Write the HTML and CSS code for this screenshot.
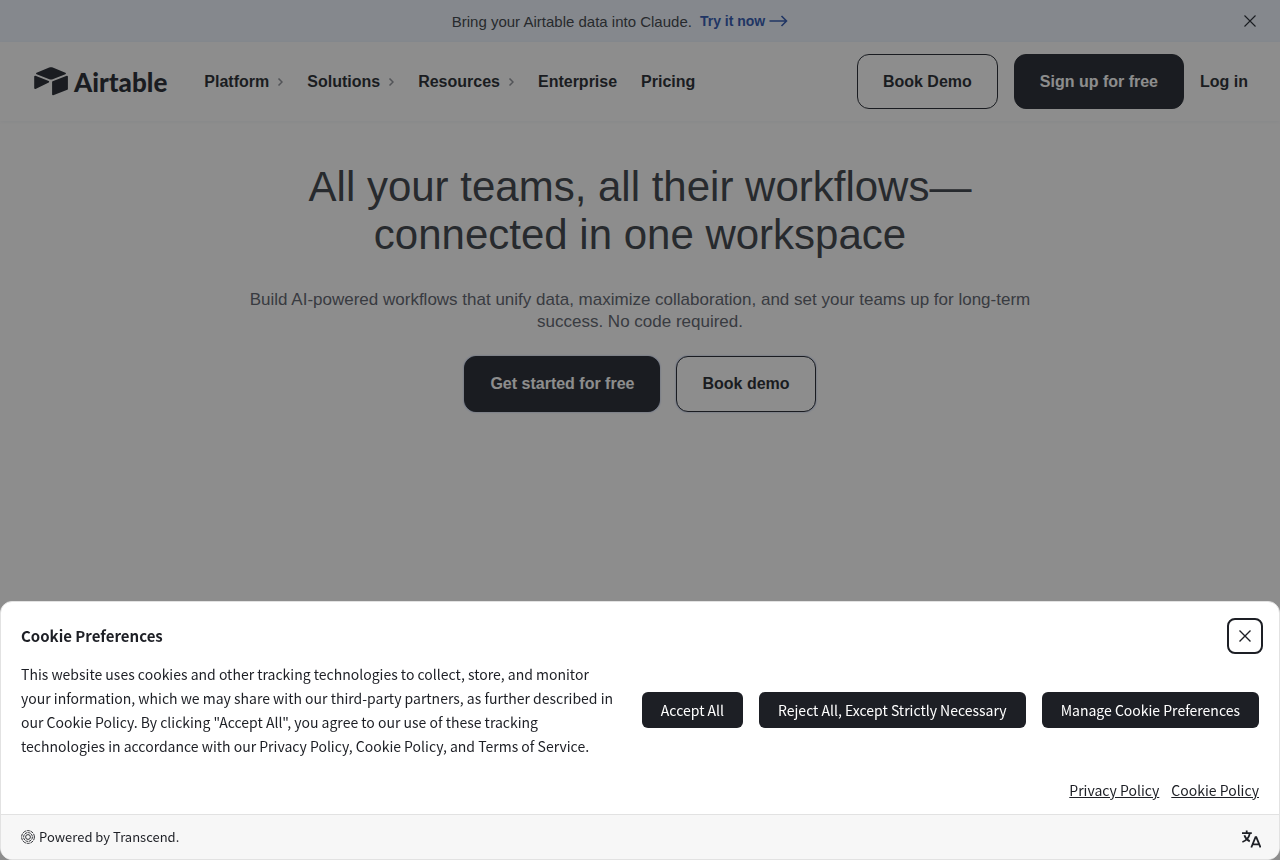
FILE: index.html
```html
<!DOCTYPE html>
<html lang="en">
<head>
  <meta charset="UTF-8">
  <meta name="viewport" content="width=device-width, initial-scale=1.0">
  <title>Airtable</title>
  <link rel="stylesheet" href="styles.css">
</head>
<body>
  <div class="banner">
    <p class="banner-text">Bring your Airtable data into Claude.
      <a class="banner-link" href="#">Try it now
        <svg width="19" height="12" viewBox="0 0 19 12" fill="none" stroke="currentColor" stroke-width="1.6"><path d="M0.500 6h17M12.500 1l5 5-5 5"/></svg>
      </a>
    </p>
    <button class="banner-close" type="button" aria-label="Dismiss">
      <svg width="12" height="12" viewBox="0 0 12 12" fill="none" stroke="currentColor" stroke-width="1.1"><path d="M0.5 0.5l11 11M11.5 0.5l-11 11"/></svg>
    </button>
  </div>

  <header class="navbar">
    <a class="logo" href="#">
      <svg width="34" height="29" viewBox="0 0 34 29" fill="currentColor">
        <path d="M15.2 0.6 2.6 5.7c-.7.3-.7 1.2 0 1.5l12.7 5c1.1.45 2.3.45 3.4 0l12.700-5c.7-.3.7-1.2 0-1.5L18.8.6c-1.150-.5-2.450-.5-3.6 0z"/>
        <path d="M18.1 15v12.4c0 .6.6 1 1.150.8l14.100-5.400c.35-.15.55-.45.55-.8V9.500c0-.6-.6-1-1.150-.8l-14.100 5.500c-.35.100-.55.450-.55.800z"/>
        <path d="M14.8 15.4 1.5 21.9c-.6.3-1.300-.1-1.300-.8V9.600c0-.65.65-1.050 1.250-.8l13.300 5.300c.55.250.6 1.050.050 1.300z"/>
      </svg>
      <span>Airtable</span>
    </a>
    <nav class="nav-links">
      <a href="#">Platform <svg width="6" height="8" viewBox="0 0 6 8"><path d="M1.500 0.500L5 4 1.500 7.500"/></svg></a>
      <a href="#">Solutions <svg width="6" height="8" viewBox="0 0 6 8"><path d="M1.500 0.500L5 4 1.500 7.500"/></svg></a>
      <a href="#">Resources <svg width="6" height="8" viewBox="0 0 6 8"><path d="M1.500 0.500L5 4 1.500 7.500"/></svg></a>
      <a href="#">Enterprise</a>
      <a href="#">Pricing</a>
    </nav>
    <div class="nav-actions">
      <button class="btn btn-outline" type="button">Book Demo</button>
      <button class="btn btn-dark" type="button">Sign up for free</button>
      <a class="login" href="#">Log in</a>
    </div>
  </header>

  <main class="hero">
    <h1>All your teams, all their workflows—<br>connected in one workspace</h1>
    <p>Build AI-powered workflows that unify data, maximize collaboration, and set your teams up for long-term success. No code required.</p>
    <div class="hero-actions">
      <button class="btn btn-dark" type="button">Get started for free</button>
      <button class="btn btn-outline" type="button">Book demo</button>
    </div>
  </main>

  <div class="backdrop"></div>

  <section class="cookie" role="dialog" aria-labelledby="cookie-title">
    <div class="cookie-header">
      <h2 id="cookie-title">Cookie Preferences</h2>
      <button class="cookie-close" type="button" aria-label="Close">
        <svg width="12" height="12" viewBox="0 0 12 12" fill="none" stroke="currentColor" stroke-width="1.4"><path d="M0.5 0.5l11 11M11.5 0.5l-11 11"/></svg>
      </button>
    </div>
    <div class="cookie-body">
      <p>This website uses cookies and other tracking technologies to collect, store, and monitor your information, which we may share with our third-party partners, as further described in our Cookie Policy. By clicking "Accept All", you agree to our use of these tracking technologies in accordance with our Privacy Policy, Cookie Policy, and Terms of Service.</p>
      <div class="cookie-buttons">
        <button type="button">Accept All</button>
        <button type="button">Reject All, Except Strictly Necessary</button>
        <button type="button">Manage Cookie Preferences</button>
      </div>
    </div>
    <div class="cookie-links">
      <a href="#">Privacy Policy</a>
      <a href="#">Cookie Policy</a>
    </div>
    <div class="cookie-footer">
      <a class="powered" href="#">
        <svg width="14" height="14" viewBox="0 0 14 14" fill="none" stroke="currentColor" stroke-width="0.9">
          <circle cx="7" cy="7" r="6.4" stroke-dasharray="3.2 0.8"/>
          <circle cx="7" cy="7" r="4.4" stroke-dasharray="2.6 0.8"/>
          <circle cx="7" cy="7" r="2.4"/>
        </svg>
        Powered by Transcend.
      </a>
      <button class="language" type="button" aria-label="Language">
        <svg width="20" height="20" viewBox="0 0 20 20" fill="none" stroke="currentColor" stroke-width="1.8">
          <path d="M5.700 1.500v2.400M1 4.200h9.800M8.800 4.400C8 8.500 5.500 11.500 1.400 13M3.400 6.200c1 3 3 5 5.400 6.200"/>
          <path d="M10.300 18.500l4.200-10.300h.8l4.200 10.300M11.700 15.300h6.400"/>
        </svg>
      </button>
    </div>
  </section>
</body>
</html>
```
FILE: styles.css
```css
* {
  box-sizing: border-box;
}

body {
  margin: 0;
  min-height: 100vh;
  background: #fff;
  color: #181d26;
  font-family: "Liberation Sans", Arial, sans-serif;
  font-size: 16px;
}

a {
  color: inherit;
  text-decoration: none;
}

button {
  font-family: inherit;
  font-size: inherit;
  color: inherit;
  cursor: pointer;
}

svg {
  display: block;
}

.banner {
  display: flex;
  align-items: center;
  height: 42px;
  padding: 0 24px;
  background: #eef5ff;
}

.banner-text {
  display: flex;
  flex: 1;
  justify-content: center;
  gap: 8px;
  margin: 0;
  padding-right: 28px;
  color: #333840;
  font-size: 15px;
}

.banner-link {
  display: flex;
  align-items: center;
  gap: 4px;
  color: #254fad;
  font-size: 14px;
  font-weight: bold;
}

.banner-close {
  padding: 0;
  border: none;
  background: none;
}

.navbar {
  display: flex;
  align-items: center;
  height: 79px;
  padding: 0 32px 0 34px;
  box-shadow: 0 1px 4px rgba(15, 48, 106, 0.06);
}

.logo {
  display: flex;
  align-items: center;
  gap: 6px;
  font-family: Lato, sans-serif;
  font-size: 26px;
  font-weight: 900;
}

.nav-links {
  display: flex;
  flex: 1;
  gap: 24px;
  margin-left: 37px;
  font-weight: bold;
}

.nav-links a {
  display: flex;
  align-items: center;
  gap: 8px;
}

.nav-links svg {
  fill: none;
  stroke: #8a8d94;
  stroke-width: 1.5;
}

.nav-actions {
  display: flex;
  align-items: center;
  gap: 16px;
}

.nav-actions .btn {
  height: 55px;
}

.login {
  font-weight: bold;
}

.btn {
  height: 56px;
  padding: 0 25px;
  border: 1px solid #181d26;
  border-radius: 12px;
  font-weight: bold;
}

.btn-outline {
  background: #fff;
}

.btn-dark {
  background: #181d26;
  color: #fff;
}

.hero {
  max-width: 832px;
  margin: 0 auto;
  padding: 42px 16px;
  text-align: center;
}

.hero h1 {
  margin: 0 0 30px;
  color: #333840;
  font-size: 42px;
  font-weight: normal;
  line-height: 48px;
}

.hero p {
  margin: 0 0 23px;
  color: #555a66;
  font-size: 17px;
  line-height: 22px;
}

.hero-actions {
  display: flex;
  justify-content: center;
  gap: 16px;
}

.hero-actions .btn {
  box-shadow: 0 0 2px rgba(45, 90, 200, 0.5);
}

.backdrop {
  position: fixed;
  inset: 0;
  background: rgba(28, 28, 28, 0.5);
}

/* cookie consent sheet */
.cookie {
  position: fixed;
  left: 0;
  right: 0;
  bottom: 0;
  overflow: hidden;
  border: 1px solid #e2e2e2;
  border-radius: 12px;
  background: #fff;
  color: #1d1f25;
  font-family: "Noto Sans CJK SC", sans-serif;
  font-size: 14px;
  line-height: 24px;
}

.cookie-header {
  display: flex;
  align-items: center;
  justify-content: space-between;
  padding: 16px 16px 0 20px;
}

.cookie-header h2 {
  margin: 0;
  font-size: 15px;
  font-weight: bold;
}

.cookie-close {
  display: flex;
  align-items: center;
  justify-content: center;
  width: 36px;
  height: 36px;
  padding: 0;
  border: 2px solid #1d1f25;
  border-radius: 8px;
  background: #fff;
}

.cookie-body {
  display: flex;
  align-items: center;
  justify-content: space-between;
  gap: 16px;
  padding: 8px 20px 20px;
}

.cookie-body p {
  max-width: 600px;
  margin: 0;
}

.cookie-buttons {
  display: flex;
  gap: 16px;
}

.cookie-buttons button {
  height: 36px;
  padding: 0 19px;
  border: none;
  border-radius: 6px;
  background: #1d1f25;
  color: #fff;
  white-space: nowrap;
}

.cookie-links {
  display: flex;
  justify-content: flex-end;
  gap: 12px;
  padding: 0 20px 12px;
}

.cookie-links a {
  text-decoration: underline;
}

.cookie-footer {
  display: flex;
  align-items: center;
  justify-content: space-between;
  height: 45px;
  padding: 0 18px 0 20px;
  border-top: 1px solid #e2e2e2;
  background: #f7f7f7;
}

.powered {
  display: flex;
  align-items: center;
  gap: 4px;
  font-size: 13px;
}

.language {
  padding: 4px 0 0;
  border: none;
  background: none;
}
```
